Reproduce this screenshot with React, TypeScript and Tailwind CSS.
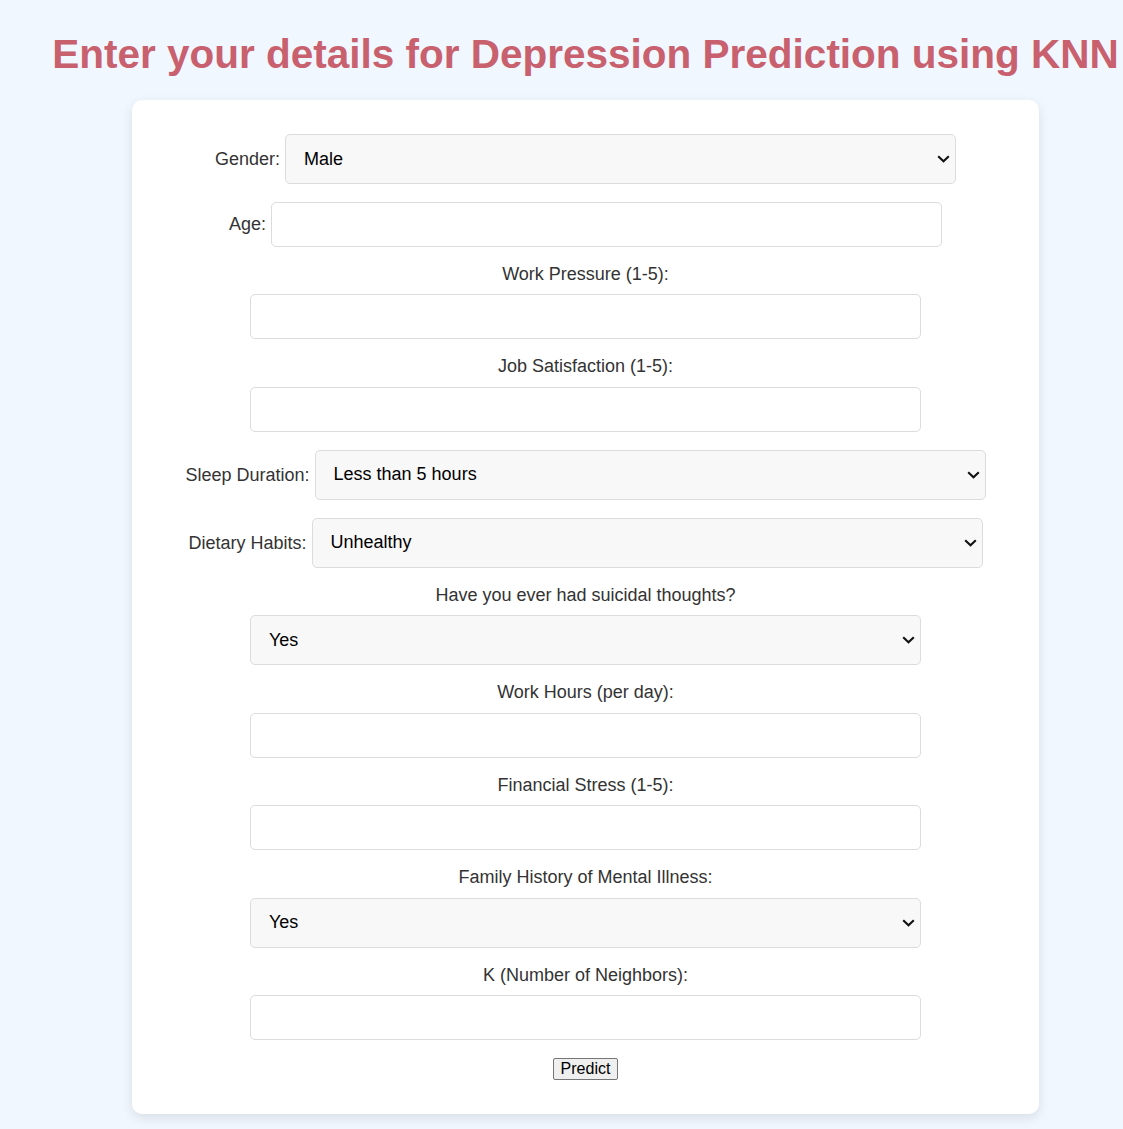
import React from 'react';

type Field = {
  id: string;
  label: string;
  kind: 'input' | 'select';
  options?: string[];
};

const fields: Field[] = [
  { id: 'gender', label: 'Gender:', kind: 'select', options: ['Male', 'Female'] },
  { id: 'age', label: 'Age:', kind: 'input' },
  { id: 'work_pressure', label: 'Work Pressure (1-5):', kind: 'input' },
  { id: 'job_satisfaction', label: 'Job Satisfaction (1-5):', kind: 'input' },
  {
    id: 'sleep_duration',
    label: 'Sleep Duration:',
    kind: 'select',
    options: ['Less than 5 hours', '5-6 hours', '7-8 hours', 'More than 8 hours'],
  },
  { id: 'dietary_habits', label: 'Dietary Habits:', kind: 'select', options: ['Unhealthy', 'Moderate', 'Healthy'] },
  { id: 'suicidal', label: 'Have you ever had suicidal thoughts?', kind: 'select', options: ['Yes', 'No'] },
  { id: 'work_hours', label: 'Work Hours (per day):', kind: 'input' },
  { id: 'financial_stress', label: 'Financial Stress (1-5):', kind: 'input' },
  { id: 'family_history', label: 'Family History of Mental Illness:', kind: 'select', options: ['Yes', 'No'] },
  { id: 'k', label: 'K (Number of Neighbors):', kind: 'input' },
];

const Chevron: React.FC = () => (
  <svg
    className="pointer-events-none absolute right-[6px] top-1/2 -translate-y-1/2"
    width="13"
    height="8"
    viewBox="0 0 13 8"
    fill="none"
  >
    <path d="M1.2 1.2 L6.5 6.3 L11.8 1.2" stroke="#111" strokeWidth="2.1" />
  </svg>
);

const FormRow: React.FC<{ field: Field }> = ({ field }) => (
  <div className="flex flex-wrap items-center justify-center gap-x-[5px] gap-y-[11px]">
    <label htmlFor={field.id} className="pt-[1px] text-[18px] leading-[17.45px] text-[#333]">
      {field.label}
    </label>
    {field.kind === 'select' ? (
      <div className="relative w-[671px] shrink-0">
        <select
          id={field.id}
          name={field.id}
          defaultValue={field.options?.[0]}
          className="block h-[50px] w-full appearance-none rounded-[5px] border border-[#dcdcdc] bg-[#f8f8f8] pl-[18px] pr-8 text-[18px] text-black outline-none"
        >
          {field.options?.map((opt) => (
            <option key={opt} value={opt}>
              {opt}
            </option>
          ))}
        </select>
        <Chevron />
      </div>
    ) : (
      <input
        id={field.id}
        name={field.id}
        type="text"
        className="block h-[45px] w-[671px] shrink-0 rounded-[5px] border border-[#dcdcdc] bg-white px-3 text-[18px] text-black outline-none"
      />
    )}
  </div>
);

const App: React.FC = () => {
  return (
    <div className="min-h-[1129px] bg-[#f0f7ff] pl-12 pt-[28px] pb-[15px] font-['Liberation_Sans',Arial,sans-serif]">
      <h1 className="mb-[20px] whitespace-nowrap text-center text-[40.5px] font-bold leading-[52px] text-[#c8606e]">
        Enter your details for Depression Prediction using KNN
      </h1>

      <div className="mx-auto w-[907px] rounded-[10px] bg-white px-10 pt-[34px] pb-[34px] shadow-[0_4px_12px_rgba(0,0,0,0.1)]">
        <form className="flex flex-col gap-[18px]" onSubmit={(e) => e.preventDefault()}>
          {fields.map((f) => (
            <FormRow key={f.id} field={f} />
          ))}
          <div className="flex justify-center">
            <button
              type="submit"
              className="h-[22px] rounded-[2px] border border-[#767676] bg-[#efefef] px-[7px] text-[16px] leading-[18px] text-black"
            >
              Predict
            </button>
          </div>
        </form>
      </div>
    </div>
  );
};

export default App;
